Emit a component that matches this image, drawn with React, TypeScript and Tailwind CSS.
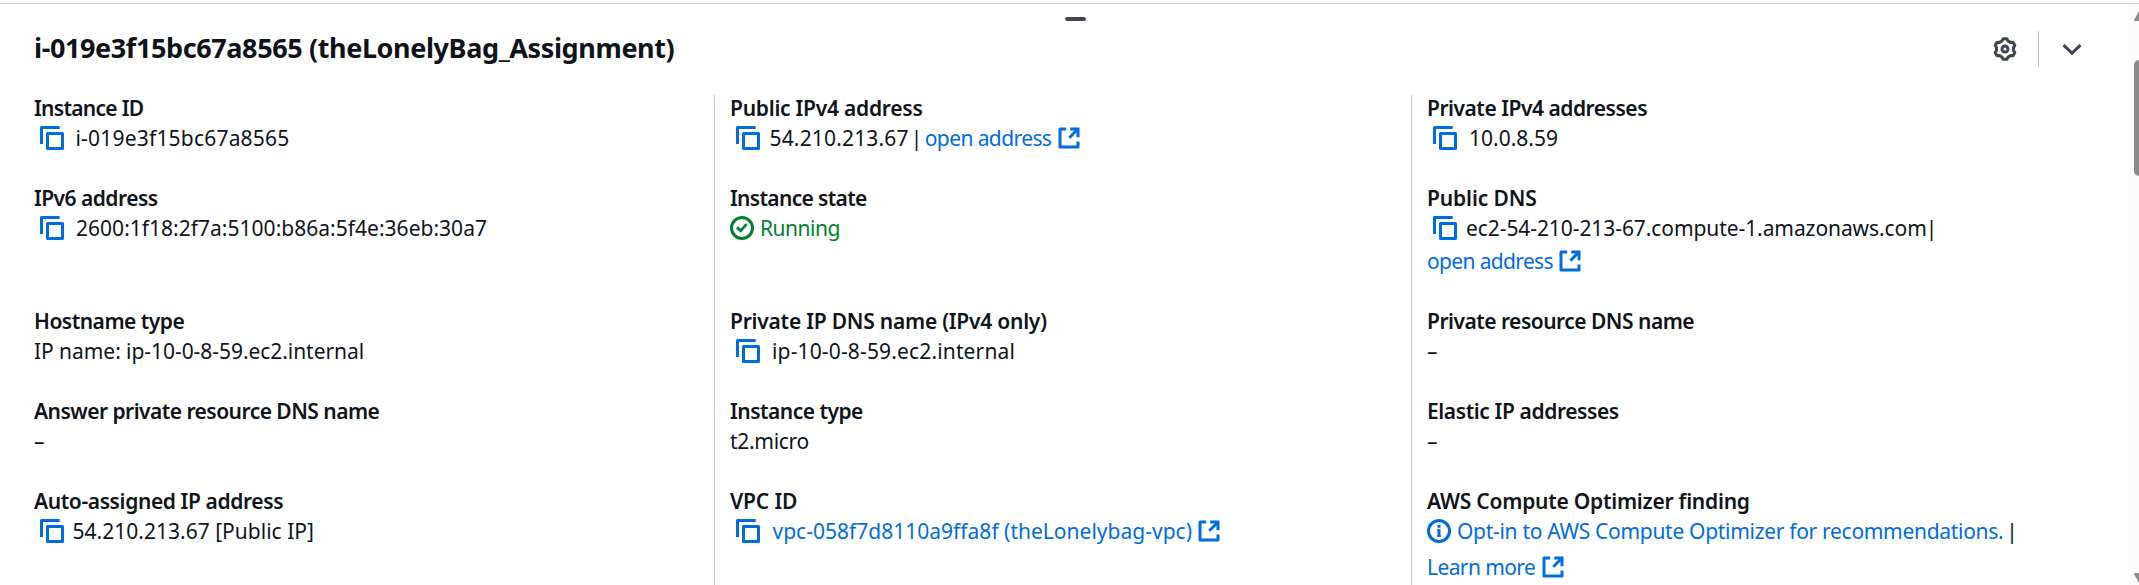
import React from "react";

type Children = { children: React.ReactNode };

const iconClass = "h-6 w-6 shrink-0";

const CopyIcon = ({ className = "" }: { className?: string }) => (
  <svg viewBox="0 0 24 24" fill="none" stroke="#006ce0" strokeWidth="3" strokeLinejoin="round" className={`${iconClass} ml-1.5 ${className}`}>
    <path d="M7.5 7.5h15v15h-15z" />
    <path d="M1.5 18V1.5h18.2" />
  </svg>
);

const ExternalIcon = ({ className = "" }: { className?: string }) => (
  <svg viewBox="0 0 24 24" fill="none" stroke="#006ce0" strokeWidth="3" strokeLinejoin="round" className={`${iconClass} ${className}`}>
    <path d="M9.2 3H3v18h18v-5.6" />
    <path d="M13.2 3H21v8.2" strokeLinejoin="miter" />
    <path d="M20.5 3.5l-8.2 8.2" />
  </svg>
);

const CheckIcon = () => (
  <svg viewBox="0 0 24 24" fill="none" stroke="#00802f" strokeWidth="3" className={iconClass}>
    <circle cx="12" cy="12" r="10.5" />
    <path d="M7 11.4l3.7 3.4 5.8-6.6" strokeWidth="2.8" />
  </svg>
);

const InfoIcon = () => (
  <svg viewBox="0 0 24 24" fill="none" stroke="#006ce0" strokeWidth="3" className={iconClass}>
    <circle cx="12" cy="12" r="10.5" />
    <path d="M12 6v2.8" />
    <path d="M12 10.2v7.4" />
    <path d="M10 11h2.5M10 17h4" strokeWidth="1.4" />
  </svg>
);

const GearIcon = () => (
  <svg viewBox="0 0 24 24" fill="none" stroke="#424650" strokeWidth="3" strokeLinejoin="round" className="h-6 w-6">
    <path d="M10.18 1.66h3.64l1.12 2.26 2.59 1.49 2.51-.16 1.83 3.16-1.4 2.1v2.98l1.4 2.1-1.83 3.16-2.51-.16-2.59 1.49-1.12 2.26h-3.64l-1.12-2.26-2.59-1.49-2.51.16-1.83-3.16 1.4-2.1v-2.98l-1.4-2.1 1.83-3.16 2.51.16 2.59-1.49z" />
    <circle cx="12" cy="12" r="3" />
  </svg>
);

const Field = ({ label, track, tall, children }: Children & { label: string; track: string; tall?: boolean }) => (
  <div className={tall ? "h-[93px]" : ""}>
    <dt className={`font-semibold ${track}`}>{label}</dt>
    <dd>{children}</dd>
  </div>
);

const Line = ({ children, className = "" }: Children & { className?: string }) => (
  <div className={`flex h-[30px] items-center ${className}`}>{children}</div>
);

const Link = ({ children, className = "" }: Children & { className?: string }) => (
  <a className={`text-[#006ce0] ${className}`}>{children}</a>
);

const Column = ({ children, className = "" }: Children & { className?: string }) => (
  <dl className={`h-[490px] ${className}`}>
    <div className="-mt-[2px] flex flex-col gap-[30px]">{children}</div>
  </dl>
);

export default function App() {
  return (
    <div className="flex h-[585px] w-[2139px] flex-col overflow-hidden bg-white font-['Noto_Sans','Open_Sans',sans-serif] text-[21px] leading-[30px] whitespace-nowrap text-[#0f141a]">
      <div className="h-1 shrink-0 border-b border-[#c6c6cd] bg-[#fafafa]" />
      <div className="flex min-h-0 flex-1">
        <main className="flex w-[2129px] flex-col">
          <div className="flex h-[27px] justify-center pt-[13px] pl-[21px]">
            <div className="h-1 w-[21px] rounded-full bg-[#424650]" />
          </div>
          <header className="flex h-9 items-center pl-[34px]">
            <h1 className="-mt-0.5 text-[27px] leading-9 font-bold tracking-[-0.394px]">i-019e3f15bc67a8565 (theLonelyBag_Assignment)</h1>
            <div className="ml-auto flex h-9 items-center">
              <GearIcon />
              <div className="ml-[21px] h-9 w-px bg-[#c6c6cd]" />
              <svg viewBox="0 0 24 24" fill="none" stroke="#424650" strokeWidth="3" className="mr-[45px] ml-[21px] h-6 w-6">
                <path d="M3.6 8.2l8.4 8 8.4-8" />
              </svg>
            </div>
          </header>
          <div className="mt-7 flex">
            <Column className="w-[714px] pl-[34px]">
              <Field label="Instance ID" track="tracking-[-0.7px]">
                <Line><CopyIcon /><span className="ml-[11.5px] tracking-[0.2px]">i-019e3f15bc67a8565</span></Line>
              </Field>
              <Field label="IPv6 address" track="tracking-[-0.53px]" tall>
                <Line><CopyIcon /><span className="ml-3 tracking-[0.02px]">2600:1f18:2f7a:5100:b86a:5f4e:36eb:30a7</span></Line>
              </Field>
              <Field label="Hostname type" track="tracking-[-0.5px]">
                <Line><span className="tracking-[-0.055px]">IP name: ip-10-0-8-59.ec2.internal</span></Line>
              </Field>
              <Field label="Answer private resource DNS name" track="tracking-[-0.53px]">
                <Line>–</Line>
              </Field>
              <Field label="Auto-assigned IP address" track="tracking-[-0.39px]">
                <Line><CopyIcon /><span className="ml-[8.5px] tracking-[0.014px]">54.210.213.67 [Public IP]</span></Line>
              </Field>
            </Column>
            <Column className="w-[697px] border-l border-[#c6c6cd] pl-[15px]">
              <Field label="Public IPv4 address" track="tracking-[-0.25px]">
                <Line>
                  <CopyIcon />
                  <span className="ml-[9.5px] tracking-[0.167px]">54.210.213.67</span>
                  <span className="ml-[2px]">|</span>
                  <Link className="ml-[2.5px] tracking-[-0.6px]">open address</Link>
                  <ExternalIcon className="ml-[6px]" />
                </Line>
              </Field>
              <Field label="Instance state" track="tracking-[-0.67px]" tall>
                <Line><CheckIcon /><span className="ml-[6px] tracking-[-0.482px] text-[#00802f]">Running</span></Line>
              </Field>
              <Field label="Private IP DNS name (IPv4 only)" track="tracking-[-0.23px]">
                <Line><CopyIcon /><span className="ml-[12px] tracking-[0.15px]">ip-10-0-8-59.ec2.internal</span></Line>
              </Field>
              <Field label="Instance type" track="tracking-[-0.51px]">
                <Line><span className="tracking-[-0.3px]">t2.micro</span></Line>
              </Field>
              <Field label="VPC ID" track="tracking-[-0.16px]">
                <Line>
                  <CopyIcon />
                  <Link className="ml-[12.5px] tracking-[0.01px]">vpc-058f7d8110a9ffa8f (theLonelybag-vpc)</Link>
                  <ExternalIcon className="ml-[5px]" />
                </Line>
              </Field>
            </Column>
            <Column className="w-[717px] border-l border-[#c6c6cd] pl-[15px]">
              <Field label="Private IPv4 addresses" track="tracking-[-0.48px]">
                <Line><CopyIcon /><span className="ml-[12px] tracking-[0.007px]">10.0.8.59</span></Line>
              </Field>
              <Field label="Public DNS" track="tracking-[-0.12px]" tall>
                <Line>
                  <CopyIcon />
                  <span className="ml-[9px] tracking-[-0.08px]">ec2-54-210-213-67.compute-1.amazonaws.com</span>
                  <span className="-ml-px">|</span>
                </Line>
                <Line className="mt-[3px]">
                  <Link className="tracking-[-0.652px]">open address</Link>
                  <ExternalIcon className="ml-[5px]" />
                </Line>
              </Field>
              <Field label="Private resource DNS name" track="tracking-[-0.51px]">
                <Line>–</Line>
              </Field>
              <Field label="Elastic IP addresses" track="tracking-[-0.4px]">
                <Line>–</Line>
              </Field>
              <Field label="AWS Compute Optimizer finding" track="tracking-[-0.24px]">
                <Line>
                  <InfoIcon />
                  <Link className="ml-[6px] tracking-[-0.303px]">Opt-in to AWS Compute Optimizer for recommendations.</Link>
                  <span className="ml-[3px]">|</span>
                </Line>
                <Line className="mt-1.5">
                  <Link className="tracking-[-0.593px]">Learn more</Link>
                  <ExternalIcon className="ml-[6px]" />
                </Line>
              </Field>
            </Column>
          </div>
        </main>
        <aside className="flex w-[10px] flex-col items-end overflow-hidden bg-[#fcfcfc] pt-[7px]">
          <svg viewBox="0 0 5 10" fill="#8b8b8b" className="h-[10px] w-[5px] shrink-0">
            <path d="M5 0v10H1q-1.4-.2-.7-1.5z" />
          </svg>
          <div className="mt-[39px] h-[116px] w-[5px] shrink-0 rounded-l-[5px] bg-[#8b8b8b]" />
          <svg viewBox="0 0 5 10" fill="#8b8b8b" className="mt-auto mb-0.5 h-[10px] w-[5px] shrink-0">
            <path d="M5 10V0H1q-1.4.2-.7 1.5z" />
          </svg>
        </aside>
      </div>
    </div>
  );
}
